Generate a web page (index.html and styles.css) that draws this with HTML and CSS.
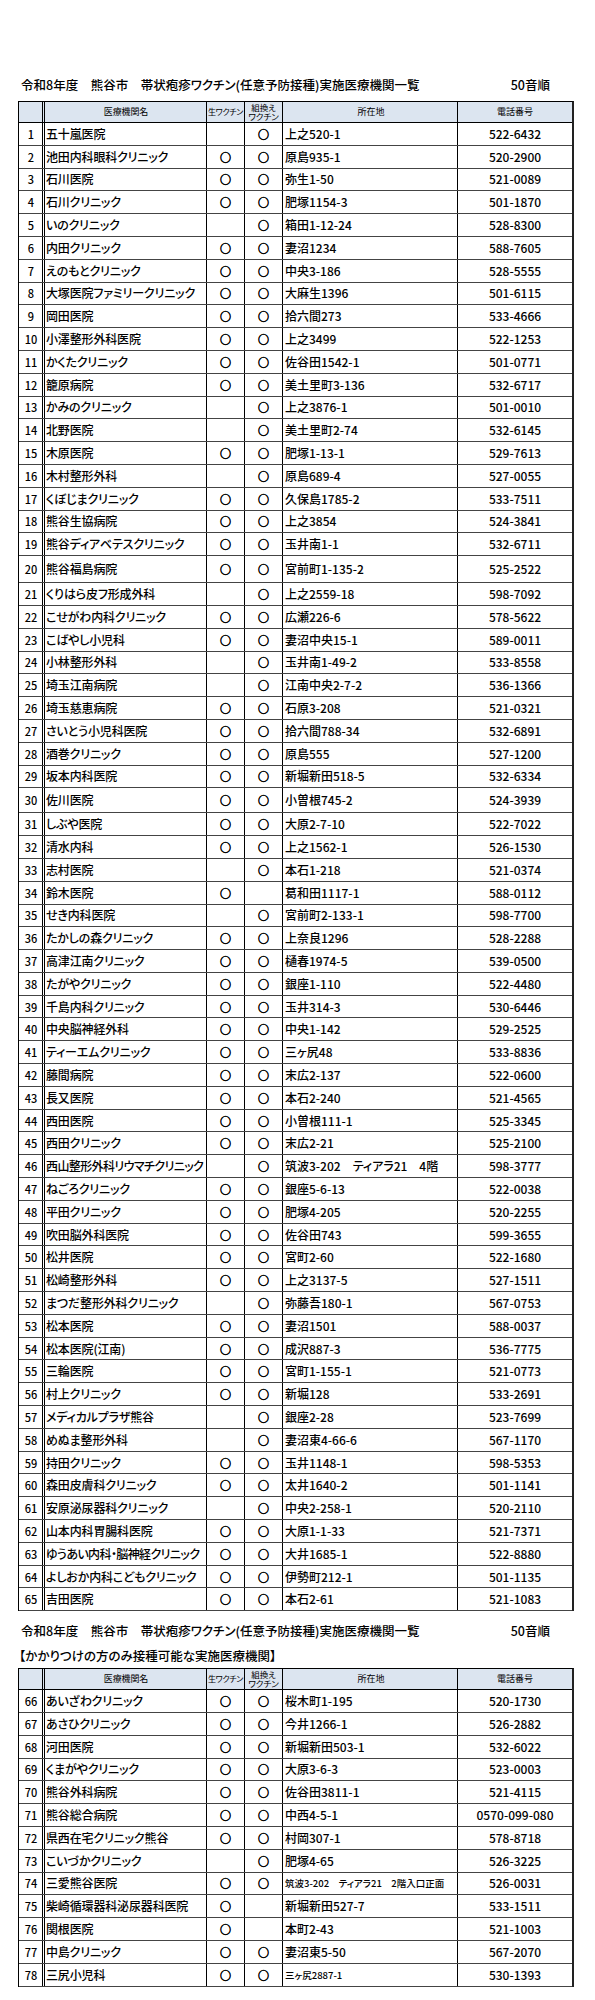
FILE: index.html
```html
<!DOCTYPE html>
<html lang="ja">
<head>
<meta charset="utf-8">
<title>帯状疱疹ワクチン実施医療機関一覧</title>
<link rel="stylesheet" href="styles.css">
</head>
<body>
<div class="page">
<section class="section first">
<div class="heading"><span>令和8年度　熊谷市　帯状疱疹ワクチン(任意予防接種)実施医療機関一覧</span><span>50音順</span></div>
<div class="table">
<div class="row head"><span class="c no"></span><span class="c name">医療機関名</span><span class="c mark">生ワクチン</span><span class="c mark two">組換え<br>ワクチン</span><span class="c addr">所在地</span><span class="c tel">電話番号</span></div>
<div class="row"><span class="c no">1</span><span class="c name">五十嵐医院</span><span class="c mark"></span><span class="c mark">○</span><span class="c addr">上之520-1</span><span class="c tel">522-6432</span></div>
<div class="row"><span class="c no">2</span><span class="c name">池田内科眼科クリニック</span><span class="c mark">○</span><span class="c mark">○</span><span class="c addr">原島935-1</span><span class="c tel">520-2900</span></div>
<div class="row"><span class="c no">3</span><span class="c name">石川医院</span><span class="c mark">○</span><span class="c mark">○</span><span class="c addr">弥生1-50</span><span class="c tel">521-0089</span></div>
<div class="row"><span class="c no">4</span><span class="c name">石川クリニック</span><span class="c mark">○</span><span class="c mark">○</span><span class="c addr">肥塚1154-3</span><span class="c tel">501-1870</span></div>
<div class="row"><span class="c no">5</span><span class="c name">いのクリニック</span><span class="c mark"></span><span class="c mark">○</span><span class="c addr">箱田1-12-24</span><span class="c tel">528-8300</span></div>
<div class="row"><span class="c no">6</span><span class="c name">内田クリニック</span><span class="c mark">○</span><span class="c mark">○</span><span class="c addr">妻沼1234</span><span class="c tel">588-7605</span></div>
<div class="row"><span class="c no">7</span><span class="c name">えのもとクリニック</span><span class="c mark">○</span><span class="c mark">○</span><span class="c addr">中央3-186</span><span class="c tel">528-5555</span></div>
<div class="row"><span class="c no">8</span><span class="c name">大塚医院ファミリークリニック</span><span class="c mark">○</span><span class="c mark">○</span><span class="c addr">大麻生1396</span><span class="c tel">501-6115</span></div>
<div class="row"><span class="c no">9</span><span class="c name">岡田医院</span><span class="c mark">○</span><span class="c mark">○</span><span class="c addr">拾六間273</span><span class="c tel">533-4666</span></div>
<div class="row"><span class="c no">10</span><span class="c name">小澤整形外科医院</span><span class="c mark">○</span><span class="c mark">○</span><span class="c addr">上之3499</span><span class="c tel">522-1253</span></div>
<div class="row"><span class="c no">11</span><span class="c name">かくたクリニック</span><span class="c mark">○</span><span class="c mark">○</span><span class="c addr">佐谷田1542-1</span><span class="c tel">501-0771</span></div>
<div class="row"><span class="c no">12</span><span class="c name">籠原病院</span><span class="c mark">○</span><span class="c mark">○</span><span class="c addr">美土里町3-136</span><span class="c tel">532-6717</span></div>
<div class="row"><span class="c no">13</span><span class="c name">かみのクリニック</span><span class="c mark"></span><span class="c mark">○</span><span class="c addr">上之3876-1</span><span class="c tel">501-0010</span></div>
<div class="row"><span class="c no">14</span><span class="c name">北野医院</span><span class="c mark"></span><span class="c mark">○</span><span class="c addr">美土里町2-74</span><span class="c tel">532-6145</span></div>
<div class="row"><span class="c no">15</span><span class="c name">木原医院</span><span class="c mark">○</span><span class="c mark">○</span><span class="c addr">肥塚1-13-1</span><span class="c tel">529-7613</span></div>
<div class="row"><span class="c no">16</span><span class="c name">木村整形外科</span><span class="c mark"></span><span class="c mark">○</span><span class="c addr">原島689-4</span><span class="c tel">527-0055</span></div>
<div class="row"><span class="c no">17</span><span class="c name">くぼじまクリニック</span><span class="c mark">○</span><span class="c mark">○</span><span class="c addr">久保島1785-2</span><span class="c tel">533-7511</span></div>
<div class="row"><span class="c no">18</span><span class="c name">熊谷生協病院</span><span class="c mark">○</span><span class="c mark">○</span><span class="c addr">上之3854</span><span class="c tel">524-3841</span></div>
<div class="row"><span class="c no">19</span><span class="c name">熊谷ディアベテスクリニック</span><span class="c mark">○</span><span class="c mark">○</span><span class="c addr">玉井南1-1</span><span class="c tel">532-6711</span></div>
<div class="row tall"><span class="c no">20</span><span class="c name">熊谷福島病院</span><span class="c mark">○</span><span class="c mark">○</span><span class="c addr">宮前町1-135-2</span><span class="c tel">525-2522</span></div>
<div class="row"><span class="c no">21</span><span class="c name">くりはら皮フ形成外科</span><span class="c mark"></span><span class="c mark">○</span><span class="c addr">上之2559-18</span><span class="c tel">598-7092</span></div>
<div class="row"><span class="c no">22</span><span class="c name">こせがわ内科クリニック</span><span class="c mark">○</span><span class="c mark">○</span><span class="c addr">広瀬226-6</span><span class="c tel">578-5622</span></div>
<div class="row"><span class="c no">23</span><span class="c name">こばやし小児科</span><span class="c mark">○</span><span class="c mark">○</span><span class="c addr">妻沼中央15-1</span><span class="c tel">589-0011</span></div>
<div class="row"><span class="c no">24</span><span class="c name">小林整形外科</span><span class="c mark"></span><span class="c mark">○</span><span class="c addr">玉井南1-49-2</span><span class="c tel">533-8558</span></div>
<div class="row"><span class="c no">25</span><span class="c name">埼玉江南病院</span><span class="c mark"></span><span class="c mark">○</span><span class="c addr">江南中央2-7-2</span><span class="c tel">536-1366</span></div>
<div class="row"><span class="c no">26</span><span class="c name">埼玉慈恵病院</span><span class="c mark">○</span><span class="c mark">○</span><span class="c addr">石原3-208</span><span class="c tel">521-0321</span></div>
<div class="row"><span class="c no">27</span><span class="c name">さいとう小児科医院</span><span class="c mark">○</span><span class="c mark">○</span><span class="c addr">拾六間788-34</span><span class="c tel">532-6891</span></div>
<div class="row"><span class="c no">28</span><span class="c name">酒巻クリニック</span><span class="c mark">○</span><span class="c mark">○</span><span class="c addr">原島555</span><span class="c tel">527-1200</span></div>
<div class="row"><span class="c no">29</span><span class="c name">坂本内科医院</span><span class="c mark">○</span><span class="c mark">○</span><span class="c addr">新堀新田518-5</span><span class="c tel">532-6334</span></div>
<div class="row mid"><span class="c no">30</span><span class="c name">佐川医院</span><span class="c mark">○</span><span class="c mark">○</span><span class="c addr">小曽根745-2</span><span class="c tel">524-3939</span></div>
<div class="row"><span class="c no">31</span><span class="c name">しぶや医院</span><span class="c mark">○</span><span class="c mark">○</span><span class="c addr">大原2-7-10</span><span class="c tel">522-7022</span></div>
<div class="row"><span class="c no">32</span><span class="c name">清水内科</span><span class="c mark">○</span><span class="c mark">○</span><span class="c addr">上之1562-1</span><span class="c tel">526-1530</span></div>
<div class="row"><span class="c no">33</span><span class="c name">志村医院</span><span class="c mark"></span><span class="c mark">○</span><span class="c addr">本石1-218</span><span class="c tel">521-0374</span></div>
<div class="row"><span class="c no">34</span><span class="c name">鈴木医院</span><span class="c mark">○</span><span class="c mark"></span><span class="c addr">葛和田1117-1</span><span class="c tel">588-0112</span></div>
<div class="row"><span class="c no">35</span><span class="c name">せき内科医院</span><span class="c mark"></span><span class="c mark">○</span><span class="c addr">宮前町2-133-1</span><span class="c tel">598-7700</span></div>
<div class="row"><span class="c no">36</span><span class="c name">たかしの森クリニック</span><span class="c mark">○</span><span class="c mark">○</span><span class="c addr">上奈良1296</span><span class="c tel">528-2288</span></div>
<div class="row"><span class="c no">37</span><span class="c name">高津江南クリニック</span><span class="c mark">○</span><span class="c mark">○</span><span class="c addr">樋春1974-5</span><span class="c tel">539-0500</span></div>
<div class="row"><span class="c no">38</span><span class="c name">たがやクリニック</span><span class="c mark">○</span><span class="c mark">○</span><span class="c addr">銀座1-110</span><span class="c tel">522-4480</span></div>
<div class="row"><span class="c no">39</span><span class="c name">千島内科クリニック</span><span class="c mark">○</span><span class="c mark">○</span><span class="c addr">玉井314-3</span><span class="c tel">530-6446</span></div>
<div class="row"><span class="c no">40</span><span class="c name">中央脳神経外科</span><span class="c mark">○</span><span class="c mark">○</span><span class="c addr">中央1-142</span><span class="c tel">529-2525</span></div>
<div class="row"><span class="c no">41</span><span class="c name">ティーエムクリニック</span><span class="c mark">○</span><span class="c mark">○</span><span class="c addr">三ヶ尻48</span><span class="c tel">533-8836</span></div>
<div class="row"><span class="c no">42</span><span class="c name">藤間病院</span><span class="c mark">○</span><span class="c mark">○</span><span class="c addr">末広2-137</span><span class="c tel">522-0600</span></div>
<div class="row"><span class="c no">43</span><span class="c name">長又医院</span><span class="c mark">○</span><span class="c mark">○</span><span class="c addr">本石2-240</span><span class="c tel">521-4565</span></div>
<div class="row"><span class="c no">44</span><span class="c name">西田医院</span><span class="c mark">○</span><span class="c mark">○</span><span class="c addr">小曽根111-1</span><span class="c tel">525-3345</span></div>
<div class="row"><span class="c no">45</span><span class="c name">西田クリニック</span><span class="c mark">○</span><span class="c mark">○</span><span class="c addr">末広2-21</span><span class="c tel">525-2100</span></div>
<div class="row"><span class="c no">46</span><span class="c name tight">西山整形外科リウマチクリニック</span><span class="c mark"></span><span class="c mark">○</span><span class="c addr">筑波3-202　ティアラ21　4階</span><span class="c tel">598-3777</span></div>
<div class="row"><span class="c no">47</span><span class="c name">ねごろクリニック</span><span class="c mark">○</span><span class="c mark">○</span><span class="c addr">銀座5-6-13</span><span class="c tel">522-0038</span></div>
<div class="row"><span class="c no">48</span><span class="c name">平田クリニック</span><span class="c mark">○</span><span class="c mark">○</span><span class="c addr">肥塚4-205</span><span class="c tel">520-2255</span></div>
<div class="row"><span class="c no">49</span><span class="c name">吹田脳外科医院</span><span class="c mark">○</span><span class="c mark">○</span><span class="c addr">佐谷田743</span><span class="c tel">599-3655</span></div>
<div class="row"><span class="c no">50</span><span class="c name">松井医院</span><span class="c mark">○</span><span class="c mark">○</span><span class="c addr">宮町2-60</span><span class="c tel">522-1680</span></div>
<div class="row"><span class="c no">51</span><span class="c name">松崎整形外科</span><span class="c mark">○</span><span class="c mark">○</span><span class="c addr">上之3137-5</span><span class="c tel">527-1511</span></div>
<div class="row"><span class="c no">52</span><span class="c name">まつだ整形外科クリニック</span><span class="c mark"></span><span class="c mark">○</span><span class="c addr">弥藤吾180-1</span><span class="c tel">567-0753</span></div>
<div class="row"><span class="c no">53</span><span class="c name">松本医院</span><span class="c mark">○</span><span class="c mark">○</span><span class="c addr">妻沼1501</span><span class="c tel">588-0037</span></div>
<div class="row"><span class="c no">54</span><span class="c name">松本医院(江南)</span><span class="c mark">○</span><span class="c mark">○</span><span class="c addr">成沢887-3</span><span class="c tel">536-7775</span></div>
<div class="row"><span class="c no">55</span><span class="c name">三輪医院</span><span class="c mark">○</span><span class="c mark">○</span><span class="c addr">宮町1-155-1</span><span class="c tel">521-0773</span></div>
<div class="row"><span class="c no">56</span><span class="c name">村上クリニック</span><span class="c mark">○</span><span class="c mark">○</span><span class="c addr">新堀128</span><span class="c tel">533-2691</span></div>
<div class="row"><span class="c no">57</span><span class="c name">メディカルプラザ熊谷</span><span class="c mark"></span><span class="c mark">○</span><span class="c addr">銀座2-28</span><span class="c tel">523-7699</span></div>
<div class="row"><span class="c no">58</span><span class="c name">めぬま整形外科</span><span class="c mark"></span><span class="c mark">○</span><span class="c addr">妻沼東4-66-6</span><span class="c tel">567-1170</span></div>
<div class="row"><span class="c no">59</span><span class="c name">持田クリニック</span><span class="c mark">○</span><span class="c mark">○</span><span class="c addr">玉井1148-1</span><span class="c tel">598-5353</span></div>
<div class="row"><span class="c no">60</span><span class="c name">森田皮膚科クリニック</span><span class="c mark">○</span><span class="c mark">○</span><span class="c addr">太井1640-2</span><span class="c tel">501-1141</span></div>
<div class="row"><span class="c no">61</span><span class="c name">安原泌尿器科クリニック</span><span class="c mark"></span><span class="c mark">○</span><span class="c addr">中央2-258-1</span><span class="c tel">520-2110</span></div>
<div class="row"><span class="c no">62</span><span class="c name">山本内科胃腸科医院</span><span class="c mark">○</span><span class="c mark">○</span><span class="c addr">大原1-1-33</span><span class="c tel">521-7371</span></div>
<div class="row"><span class="c no">63</span><span class="c name tight">ゆうあい内科・脳神経クリニック</span><span class="c mark">○</span><span class="c mark">○</span><span class="c addr">大井1685-1</span><span class="c tel">522-8880</span></div>
<div class="row"><span class="c no">64</span><span class="c name">よしおか内科こどもクリニック</span><span class="c mark">○</span><span class="c mark">○</span><span class="c addr">伊勢町212-1</span><span class="c tel">501-1135</span></div>
<div class="row"><span class="c no">65</span><span class="c name">吉田医院</span><span class="c mark">○</span><span class="c mark">○</span><span class="c addr">本石2-61</span><span class="c tel">521-1083</span></div>
</div>
</section>

<section class="section second">
<div class="heading"><span>令和8年度　熊谷市　帯状疱疹ワクチン(任意予防接種)実施医療機関一覧</span><span>50音順</span></div>
<div class="sub">【かかりつけの方のみ接種可能な実施医療機関】</div>
<div class="table">
<div class="row head"><span class="c no"></span><span class="c name">医療機関名</span><span class="c mark">生ワクチン</span><span class="c mark two">組換え<br>ワクチン</span><span class="c addr">所在地</span><span class="c tel">電話番号</span></div>
<div class="row"><span class="c no">66</span><span class="c name">あいざわクリニック</span><span class="c mark">○</span><span class="c mark">○</span><span class="c addr">桜木町1-195</span><span class="c tel">520-1730</span></div>
<div class="row"><span class="c no">67</span><span class="c name">あさひクリニック</span><span class="c mark">○</span><span class="c mark">○</span><span class="c addr">今井1266-1</span><span class="c tel">526-2882</span></div>
<div class="row"><span class="c no">68</span><span class="c name">河田医院</span><span class="c mark">○</span><span class="c mark">○</span><span class="c addr">新堀新田503-1</span><span class="c tel">532-6022</span></div>
<div class="row"><span class="c no">69</span><span class="c name">くまがやクリニック</span><span class="c mark">○</span><span class="c mark">○</span><span class="c addr">大原3-6-3</span><span class="c tel">523-0003</span></div>
<div class="row"><span class="c no">70</span><span class="c name">熊谷外科病院</span><span class="c mark">○</span><span class="c mark">○</span><span class="c addr">佐谷田3811-1</span><span class="c tel">521-4115</span></div>
<div class="row"><span class="c no">71</span><span class="c name">熊谷総合病院</span><span class="c mark">○</span><span class="c mark">○</span><span class="c addr">中西4-5-1</span><span class="c tel">0570-099-080</span></div>
<div class="row"><span class="c no">72</span><span class="c name">県西在宅クリニック熊谷</span><span class="c mark">○</span><span class="c mark">○</span><span class="c addr">村岡307-1</span><span class="c tel">578-8718</span></div>
<div class="row"><span class="c no">73</span><span class="c name">こいづかクリニック</span><span class="c mark"></span><span class="c mark">○</span><span class="c addr">肥塚4-65</span><span class="c tel">526-3225</span></div>
<div class="row"><span class="c no">74</span><span class="c name">三愛熊谷医院</span><span class="c mark">○</span><span class="c mark">○</span><span class="c addr small">筑波3-202　ティアラ21　2階入口正面</span><span class="c tel">526-0031</span></div>
<div class="row"><span class="c no">75</span><span class="c name">柴崎循環器科泌尿器科医院</span><span class="c mark">○</span><span class="c mark"></span><span class="c addr">新堀新田527-7</span><span class="c tel">533-1511</span></div>
<div class="row"><span class="c no">76</span><span class="c name">関根医院</span><span class="c mark">○</span><span class="c mark"></span><span class="c addr">本町2-43</span><span class="c tel">521-1003</span></div>
<div class="row"><span class="c no">77</span><span class="c name">中島クリニック</span><span class="c mark">○</span><span class="c mark">○</span><span class="c addr">妻沼東5-50</span><span class="c tel">567-2070</span></div>
<div class="row"><span class="c no">78</span><span class="c name">三尻小児科</span><span class="c mark">○</span><span class="c mark">○</span><span class="c addr small">三ヶ尻2887-1</span><span class="c tel">530-1393</span></div>
</div>
</section>
</div>
</body>
</html>
```

FILE: styles.css
```css
html, body {
  margin: 0;
  padding: 0;
  background: #fff;
}

body {
  font-family: "Noto Sans CJK JP", "Liberation Sans", sans-serif;
  font-feature-settings: "palt";
  font-weight: 500;
  color: #000;
}

.page {
  width: 595px;
  padding-top: 76px;
}

.section {
  margin-left: 18px;
  width: 556px;
}

.second {
  margin-top: 11px;
}

.heading {
  display: flex;
  justify-content: space-between;
  font-size: 12.5px;
  line-height: 18px;
  height: 18px;
  padding: 0 24px 0 3px;
  margin-bottom: 7px;
}

.sub {
  font-size: 12.5px;
  line-height: 18px;
  height: 18px;
  padding-left: 1px;
  margin-bottom: 3px;
}

.table {
  border-top: 1px solid #000;
  border-left: 1px solid #000;
  border-right: 2px solid #222;
}

.row {
  display: grid;
  grid-template-columns: 26px 162px 38px 38px 175px 1fr;
  height: 22.8px;
  box-sizing: border-box;
  border-bottom: 1px solid #444;
}

.row.tall {
  height: 27px;
}

.row.mid {
  height: 25px;
}

.row.head {
  height: 21px;
  background: #dce5f0;
  border-bottom: 1px solid #000;
}

.c {
  display: flex;
  align-items: center;
  border-right: 1px solid #000;
  white-space: nowrap;
  overflow: hidden;
  font-size: 12px;
  line-height: 14px;
}

.no {
  justify-content: center;
  border-right: 3px double #000;
  font-size: 11px;
  padding-left: 1px;
}

.name {
  padding-left: 1px;
  letter-spacing: -0.15px;
}

.name.tight {
  letter-spacing: -0.6px;
}

.mark {
  justify-content: center;
  font-size: 11px;
  font-weight: 700;
  -webkit-text-stroke: 0.6px #000;
}

.addr {
  padding-left: 2px;
}

.addr.small {
  font-size: 9.5px;
}

.tel {
  justify-content: center;
  border-right: none;
}

.head .c {
  font-size: 9px;
  line-height: 10px;
  font-weight: 400;
  justify-content: center;
  text-align: center;
  -webkit-text-stroke: 0;
}

.head .mark {
  font-size: 8px;
  letter-spacing: -0.3px;
}

.head .mark.two {
  font-size: 8.5px;
  line-height: 9px;
  letter-spacing: 0;
}
```
